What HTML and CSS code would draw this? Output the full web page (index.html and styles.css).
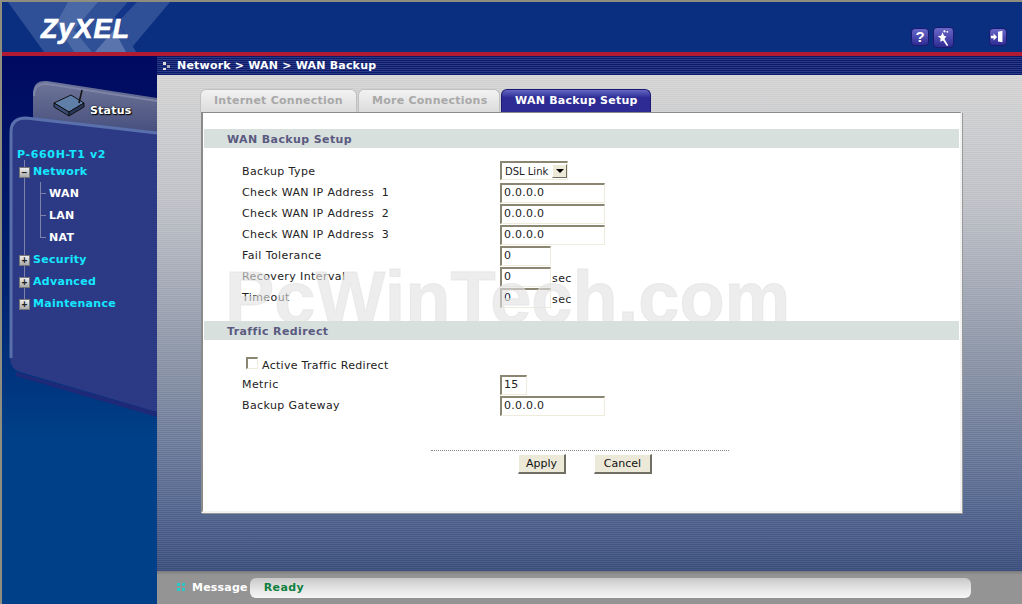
FILE: index.html
```html
<!DOCTYPE html>
<html lang="en">
<head>
    <meta charset="UTF-8">
    <meta name="viewport" content="width=device-width, initial-scale=1.0">
    <title>WAN Backup Setup</title>
    <link rel="stylesheet" href="styles.css">
</head>
<body>
    <div class="page">
        <header class="top">
            <svg class="top-art" width="170" height="50" viewBox="0 0 170 50">
                <polygon points="6,0 126,0 113,15 134,50 42,50" fill="#2f4f96"/>
                <polygon points="66,0 96,0 72,28 90,50 72,50 54,22" fill="#4a68a6"/>
                <polygon points="93,50 112,28 124,50" fill="#5a75ae"/>
                <polygon points="126,0 135,0 119,20 113,15" fill="#12358a"/>
                <polygon points="135,0 168,0 126,50 134,50 116,20" fill="#2f4f96"/>
            </svg>
            <div class="logo">ZyXEL</div>
            <div class="top-icons">
                <span class="icon-btn">?</span>
                <span class="icon-btn icon-wide">
                    <svg width="20" height="20" viewBox="0 0 20 20">
                        <path d="M4 8l3.500-.5L9 4l1.500 3.500 2.500 1-2 2.500 4 6.500-1.500 1-4-6-3 1.500.5-3.500z" fill="#fff"/>
                        <circle cx="11" cy="3" r="1.200" fill="#fff"/>
                        <circle cx="14" cy="3.500" r="1" fill="#fff"/>
                    </svg>
                </span>
                <span class="icon-btn icon-exit">
                    <svg width="18" height="18" viewBox="0 0 18 18">
                        <path d="M9 3l5-1v13l-5-1z" fill="#fff"/>
                        <path d="M1 7.500h3V5l4 4-4 4v-2.500H1z" fill="#fff"/>
                    </svg>
                </span>
            </div>
        </header>
        <div class="redline"></div>

        <div class="layout">
            <aside class="side">
                <svg class="side-art" width="155" height="515" viewBox="0 0 155 515">
                    <defs>
                        <linearGradient id="tabFill" x1="0" y1="0" x2="0" y2="1">
                            <stop offset="0" stop-color="#6f7598"/>
                            <stop offset="1" stop-color="#3a4476"/>
                        </linearGradient>
                    </defs>
                    <path d="M31 38q0-14 14-13l110 17v50H31z" fill="url(#tabFill)"/>
                    <path d="M32 40q0-13 13-12l110 17" fill="none" stroke="#7d84a8" stroke-width="2"/>
                    <path d="M8 76q0-15 16-15l131 15v280l-137-40q-10-3-10-14z" fill="#2c3a85"/>
                    <path d="M9 302V76q0-14 15-14l131 15" fill="none" stroke="#5a70ac" stroke-width="3"/>
                    <path d="M14 316l141 40v5l-141-41z" fill="#1e2a78"/>
                    <g transform="translate(51 33)">
                        <path d="M1 14l17-8 13 8-15 9z" fill="#5f7ea8" stroke="#111" stroke-width="1"/>
                        <path d="M1 14l15 9v4L1 18z" fill="#3a4c74" stroke="#111" stroke-width="1"/>
                        <path d="M16 23l15-9v4l-15 9z" fill="#28375a" stroke="#111" stroke-width="1"/>
                        <line x1="26" y1="14" x2="29" y2="1" stroke="#111" stroke-width="1.500"/>
                    </g>
                </svg>
                <div class="status-tab">Status</div>
                <div class="tree">
                    <div class="tree-title">P-660H-T1 v2</div>
                    <div class="tree-node"><span class="toggle">&minus;</span>Network</div>
                    <div class="tree-sub">
                        <div class="tree-leaf">WAN</div>
                        <div class="tree-leaf">LAN</div>
                        <div class="tree-leaf">NAT</div>
                    </div>
                    <div class="tree-node"><span class="toggle">+</span>Security</div>
                    <div class="tree-node"><span class="toggle">+</span>Advanced</div>
                    <div class="tree-node"><span class="toggle">+</span>Maintenance</div>
                </div>
            </aside>

            <div class="content">
                <div class="crumb"><span class="crumb-dots"></span>Network &gt; WAN &gt; WAN Backup</div>
                <main class="main">
                    <div class="tabs">
                        <div class="tab tab-first">Internet Connection</div>
                        <div class="tab tab-second">More Connections</div>
                        <div class="tab tab-active">WAN Backup Setup</div>
                    </div>
                    <div class="panel">
                        <div class="watermark">PcWinTech.com</div>
                        <div class="section-head">WAN Backup Setup</div>
                        <div class="rows rows-first">
                            <div class="row">
                                <label>Backup Type</label>
                                <div class="select"><span class="select-text">DSL Link</span><span class="select-arrow"></span></div>
                            </div>
                            <div class="row"><label>Check WAN IP Address&nbsp; 1</label><input type="text" value="0.0.0.0"></div>
                            <div class="row"><label>Check WAN IP Address&nbsp; 2</label><input type="text" value="0.0.0.0"></div>
                            <div class="row"><label>Check WAN IP Address&nbsp; 3</label><input type="text" value="0.0.0.0"></div>
                            <div class="row"><label>Fail Tolerance</label><input class="short" type="text" value="0"></div>
                            <div class="row"><label>Recovery Interval</label><input class="short" type="text" value="0"><span class="unit">sec</span></div>
                            <div class="row"><label>Timeout</label><input class="short" type="text" value="0"><span class="unit">sec</span></div>
                        </div>
                        <div class="section-head section-second">Traffic Redirect</div>
                        <div class="check-row"><input type="checkbox">Active Traffic Redirect</div>
                        <div class="rows">
                            <div class="row"><label>Metric</label><input class="tiny" type="text" value="15"></div>
                            <div class="row"><label>Backup Gateway</label><input type="text" value="0.0.0.0"></div>
                        </div>
                        <div class="actions">
                            <button class="btn-apply">Apply</button>
                            <button class="btn-cancel">Cancel</button>
                        </div>
                    </div>
                </main>
                <footer class="statusbar">
                    <span class="status-dots"></span>
                    <span class="status-label">Message</span>
                    <div class="status-pill">Ready</div>
                </footer>
            </div>
        </div>
    </div>
</body>
</html>
```

FILE: styles.css
```css
html, body {
    margin: 0;
    padding: 0;
}
body {
    font-family: "DejaVu Sans", Verdana, sans-serif;
    font-size: 11px;
    color: #222;
    overflow: hidden;
}
.page {
    width: 1022px;
    height: 604px;
    box-sizing: border-box;
    border-top: 2px solid #8f8d80;
    border-left: 2px solid #8f8d80;
    display: flex;
    flex-direction: column;
}

/* header */
.top {
    height: 50px;
    flex: none;
    background-color: #0b2f80;
    position: relative;
    display: flex;
    justify-content: space-between;
}
.top-art {
    position: absolute;
    left: 0;
    top: 0;
}
.logo {
    position: relative;
    margin: 11px 0 0 39px;
    font-family: "Liberation Sans", Arial, sans-serif;
    font-weight: bold;
    font-style: italic;
    font-size: 27px;
    line-height: 32px;
    letter-spacing: 1px;
    color: #fff;
    -webkit-text-stroke: 0.7px #fff;
}
.top-icons {
    display: flex;
    align-items: flex-start;
    padding: 26px 15px 0 0;
}
.icon-btn {
    width: 18px;
    height: 18px;
    border-radius: 4px;
    border: 1px solid #1a1a70;
    box-sizing: border-box;
    background: linear-gradient(#6a68c8, #2e2c94);
    color: #fff;
    font: bold 15px/16px "Liberation Sans", Arial, sans-serif;
    text-align: center;
    display: flex;
    align-items: center;
    justify-content: center;
}
.icon-wide {
    width: 21px;
    height: 21px;
    margin: -1px 0 0 4px;
}
.icon-exit {
    margin-left: 35px;
}
.redline {
    height: 4px;
    flex: none;
    background-color: #b01a32;
}

.layout {
    flex: 1;
    display: flex;
    min-height: 0;
}

/* sidebar */
.side {
    width: 155px;
    flex: none;
    position: relative;
    background: linear-gradient(#000a60 0, #00206e 40%, #004088 70%);
}
.side-art {
    position: absolute;
    left: 0;
    top: 0;
}
.status-tab {
    position: absolute;
    left: 88px;
    top: 48px;
    font-weight: bold;
    letter-spacing: 0.2px;
    color: #fff;
    text-shadow: 1px 1px 1px #000, 0 0 2px #000;
}
.tree {
    position: relative;
    padding: 90px 0 0 15px;
    font-weight: bold;
    letter-spacing: 0.3px;
}
.tree:before {
    content: "";
    position: absolute;
    left: 22px;
    top: 104px;
    height: 143px;
    border-left: 1px solid #7c82a8;
}
.tree-title {
    height: 17px;
    line-height: 17px;
    letter-spacing: 0.65px;
    color: #14e8ff;
}
.tree-node {
    height: 22px;
    line-height: 17px;
    color: #14e8ff;
    display: flex;
    position: relative;
}
.toggle {
    width: 9px;
    height: 9px;
    margin: 4px 3px 0 2px;
    background: linear-gradient(#eee, #aaa);
    border: 1px solid #777;
    color: #222;
    font: bold 10px/9px "Liberation Sans", Arial, sans-serif;
    text-align: center;
    letter-spacing: 0;
    flex: none;
}
.tree-sub {
    margin-left: 23px;
    height: 66px;
    position: relative;
}
.tree-sub:before {
    content: "";
    position: absolute;
    left: 0;
    top: -3px;
    height: 55px;
    border-left: 1px solid #7c82a8;
}
.tree-leaf {
    height: 22px;
    line-height: 17px;
    padding-left: 9px;
    color: #fff;
    position: relative;
}
.tree-leaf:before {
    content: "";
    position: absolute;
    left: 0;
    top: 8px;
    width: 6px;
    border-top: 1px solid #7c82a8;
}

/* main area */
.content {
    flex: 1;
    display: flex;
    flex-direction: column;
    min-width: 0;
}
.crumb {
    height: 19px;
    flex: none;
    display: flex;
    align-items: center;
    padding-left: 6px;
    font-weight: bold;
    color: #fff;
    letter-spacing: 0.2px;
    background: repeating-linear-gradient(#0a1a68 0, #0a1a68 1px, #2c3a88 1px, #2c3a88 2px);
}
.crumb-dots {
    width: 8px;
    height: 8px;
    margin-right: 6px;
    background:
        linear-gradient(#ddd, #ddd) 0 0 / 3px 3px no-repeat,
        linear-gradient(#aab, #aab) 4px 3px / 3px 3px no-repeat,
        linear-gradient(#ddd, #ddd) 0 6px / 3px 2px no-repeat;
}
.main {
    flex: 1;
    padding: 14px 60px 0 44px;
    background:
        repeating-linear-gradient(rgba(255,255,255,0.06) 0, rgba(255,255,255,0.06) 1px, rgba(0,0,0,0.04) 1px, rgba(0,0,0,0.04) 2px),
        linear-gradient(#d8d8d8 0, #c4c6cc 25%, #8a94a8 60%, #5a6c94 85%, #3c5080 100%);
}
.tabs {
    display: flex;
    height: 23px;
    font-weight: bold;
    letter-spacing: 0.25px;
}
.tab {
    box-sizing: border-box;
    height: 23px;
    line-height: 22px;
    padding-left: 13px;
    border-radius: 6px 6px 0 0;
    color: #a8a8a8;
    background: linear-gradient(#f2f2f2, #dcdcdc);
    border: 1px solid #c0c0c0;
    border-bottom: none;
}
.tab-first {
    width: 157px;
    margin-left: -1px;
}
.tab-second {
    width: 142px;
    margin-left: 1px;
}
.tab-active {
    width: 150px;
    margin-left: 1px;
    color: #fff;
    background: linear-gradient(#6468c4 0, #2e2c94 35%, #2e2c94 100%);
    border-color: #1a1a70;
}
.panel {
    position: relative;
    box-sizing: border-box;
    height: 401px;
    background-color: #fff;
    border: 2px solid #f2f2f2;
    border-top-color: #8a8a8a;
    border-left-color: #8a8a8a;
    border-top-width: 1px;
    padding: 16px 1px 0 1px;
    box-shadow: 1px 1px 0 #999;
}
.watermark {
    position: absolute;
    left: 22px;
    top: 149px;
    font-family: "Liberation Sans", Arial, sans-serif;
    font-weight: bold;
    font-size: 74px;
    line-height: 72px;
    color: rgba(225, 225, 225, 0.6);
    -webkit-text-stroke: 1px rgba(225, 225, 225, 0.6);
    white-space: nowrap;
    pointer-events: none;
    z-index: 1;
}
.section-head {
    position: relative;
    z-index: 2;
    height: 19px;
    line-height: 21px;
    padding-left: 23px;
    background-color: #d8e0de;
    color: #5a5a80;
    font-weight: bold;
    letter-spacing: 0.4px;
}
.section-second {
    margin-top: 12px;
}
.rows {
    padding-left: 38px;
}
.rows-first {
    padding-top: 14px;
}
.row {
    height: 21px;
    display: flex;
    align-items: flex-start;
    line-height: 20px;
    letter-spacing: 0.4px;
}
.row label {
    width: 258px;
    flex: none;
}
.row input {
    box-sizing: border-box;
    width: 105px;
    height: 20px;
    padding: 0 1px 2px 2px;
    font-family: inherit;
    font-size: 11px;
    letter-spacing: 0.25px;
    color: #222;
    background: transparent;
    border: 1px solid #f0ecdc;
    border-top: 2px solid #8a8672;
    border-left: 2px solid #8a8672;
    outline: none;
}
.row input.short {
    width: 51px;
}
.row input.tiny {
    width: 27px;
}
.unit {
    margin: 2px 0 0 1px;
}
.select {
    box-sizing: border-box;
    width: 68px;
    height: 19px;
    margin-top: -1px;
    display: flex;
    align-items: center;
    justify-content: space-between;
    border: 1px solid #f0ecdc;
    border-top: 2px solid #8a8672;
    border-left: 2px solid #8a8672;
    font-size: 10px;
    letter-spacing: 0;
    padding-left: 3px;
}
.select-text {
    padding-top: 1px;
}
.select-arrow {
    width: 15px;
    height: 14px;
    box-sizing: border-box;
    background-color: #ece9d8;
    border: 1px solid;
    border-color: #fff #716f64 #716f64 #fff;
    position: relative;
}
.select-arrow:after {
    content: "";
    position: absolute;
    left: 3px;
    top: 4px;
    border: 4px solid transparent;
    border-top-color: #000;
    border-bottom: none;
}
.check-row {
    display: flex;
    align-items: center;
    height: 20px;
    margin: 15px 0 0 42px;
    letter-spacing: 0.3px;
}
.check-row input {
    appearance: none;
    box-sizing: border-box;
    width: 12px;
    height: 12px;
    margin: -5px 4px 0 0;
    background: #fff;
    border: 1px solid #f0ecdc;
    border-top: 2px solid #8a8672;
    border-left: 2px solid #8a8672;
}
.actions {
    margin: 33px 0 0 227px;
    width: 298px;
    height: 22px;
    border-top: 1px dotted #888;
    padding-top: 3px;
    display: flex;
}
.actions button {
    box-sizing: border-box;
    height: 20px;
    padding: 0;
    font-family: inherit;
    font-size: 11px;
    color: #111;
    background-color: #ece9d8;
    border: 1px solid;
    border-color: #fff #716f64 #716f64 #fff;
    border-width: 1px 2px 2px 1px;
}
.btn-apply {
    width: 48px;
    margin-left: 87px;
}
.btn-cancel {
    width: 58px;
    margin-left: 28px;
}

/* bottom bar */
.statusbar {
    height: 33px;
    flex: none;
    box-sizing: border-box;
    display: flex;
    align-items: center;
    padding: 0 51px 0 20px;
    background: linear-gradient(#7c7c7c 0, #949494 4px);
}
.status-dots {
    width: 8px;
    height: 8px;
    flex: none;
    margin: -2px 7px 0 0;
    background:
        linear-gradient(#2cc8c8, #2cc8c8) 0 0 / 3px 3px no-repeat,
        linear-gradient(#2cc8c8, #2cc8c8) 5px 0 / 3px 3px no-repeat,
        linear-gradient(#2cc8c8, #2cc8c8) 0 5px / 3px 3px no-repeat,
        linear-gradient(#2cc8c8, #2cc8c8) 5px 5px / 3px 3px no-repeat;
}
.status-label {
    font-weight: bold;
    color: #fff;
    letter-spacing: 0.2px;
    margin-right: 2px;
}
.status-pill {
    flex: 1;
    height: 20px;
    line-height: 20px;
    padding-left: 14px;
    border-radius: 6px;
    font-weight: bold;
    letter-spacing: 0.4px;
    color: #108040;
    background: linear-gradient(#c8c8c8 0, #e8e8e8 60%, #f6f6f6 100%);
}
```
